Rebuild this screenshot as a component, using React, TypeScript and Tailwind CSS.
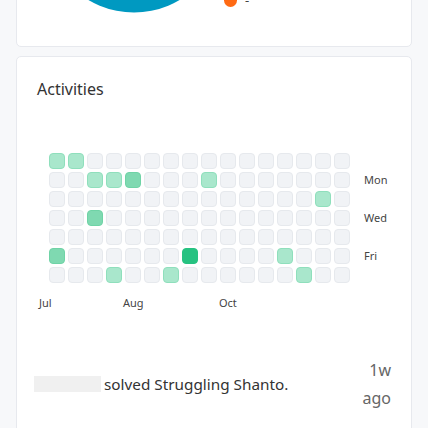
import React from "react";

const LIGHT = new Set(["0-0", "0-1", "1-2", "1-3", "1-8", "2-14", "6-3", "6-6", "5-12", "6-13"]);
const MED = new Set(["1-4", "3-2", "5-0"]);
const DARK = new Set(["5-7"]);

function cellClass(r: number, c: number) {
  const k = `${r}-${c}`;
  if (DARK.has(k)) return "bg-[#26c281] border-[#26c281]";
  if (MED.has(k)) return "bg-[#7fd9b1] border-[#6fd3a6]";
  if (LIGHT.has(k)) return "bg-[#a9e7cc] border-[#8fdfbc]";
  return "bg-[#f1f3f6] border-[#e6e9ed]";
}

const months = [
  { label: "Jul", left: -10 },
  { label: "Aug", left: 74 },
  { label: "Oct", left: 170 },
];

export default function App() {
  const rows = Array.from({ length: 7 }, (_, r) => r);
  const cols = Array.from({ length: 16 }, (_, c) => c);
  const dayLabels = ["", "Mon", "", "Wed", "", "Fri", ""];
  return (
    <div
      className="w-[428px] h-[428px] overflow-hidden bg-[#f7f8fa]"
      style={{ fontFamily: '"Noto Sans", "Open Sans", sans-serif' }}
    >
      <div className="flex flex-col gap-[9px] px-4 -mt-[220px]">
        {/* top card */}
        <div className="h-[267px] bg-white rounded-[5px] border border-[#e7e9ee] flex items-end pb-[33px] pl-[27px]">
          <div className="flex items-end">
            <svg width="180" height="180" viewBox="0 0 180 180">
              <circle cx="90" cy="90" r="89.5" fill="#0099c1" />
            </svg>
            <div className="flex items-center gap-[8px] mb-[6px]">
              <span className="w-[13px] h-[13px] rounded-full bg-[#ff6a13]" />
              <span className="text-[13px] leading-[13px] text-[#444]">-</span>
            </div>
          </div>
        </div>
        {/* activities card */}
        <div className="bg-white rounded-[5px] border border-[#e7e9ee] px-5 pt-[20px] pb-8">
          <div className="text-[16px] leading-[24px] text-[#333]">Activities</div>
          <div className="mt-[52px] pl-[12px] flex items-start gap-[14px]">
            <div className="flex flex-col">
              <div className="flex flex-col gap-[3px]">
                {rows.map((r) => (
                  <div key={r} className="flex gap-[3px]">
                    {cols.map((c) => (
                      <div
                        key={c}
                        className={`w-[16px] h-[16px] rounded-[4px] border ${cellClass(r, c)}`}
                      />
                    ))}
                  </div>
                ))}
              </div>
              <div className="relative h-[16px] mt-[12px]">
                {months.map((m) => (
                  <span
                    key={m.label}
                    className="absolute top-0 text-[11px] leading-[16px] text-[#444]"
                    style={{ left: m.left }}
                  >
                    {m.label}
                  </span>
                ))}
              </div>
            </div>
            <div className="flex flex-col gap-[3px]">
              {dayLabels.map((d, i) => (
                <div key={i} className="h-[16px] text-[11px] leading-[16px] text-[#444]">
                  {d}
                </div>
              ))}
            </div>
          </div>
          <div className="mt-[45px] flex items-center justify-between">
            <div className="flex items-center">
              <span className="w-[67px] h-[16px] bg-[#f0f0f0] -ml-[3px] mr-[3px]" />
              <span className="text-[15.3px] leading-[24px] text-[#333]">solved Struggling Shanto.</span>
            </div>
            <div className="text-right text-[16px] leading-[28px] text-[#666]">
              1w
              <br />
              ago
            </div>
          </div>
        </div>
      </div>
    </div>
  );
}
